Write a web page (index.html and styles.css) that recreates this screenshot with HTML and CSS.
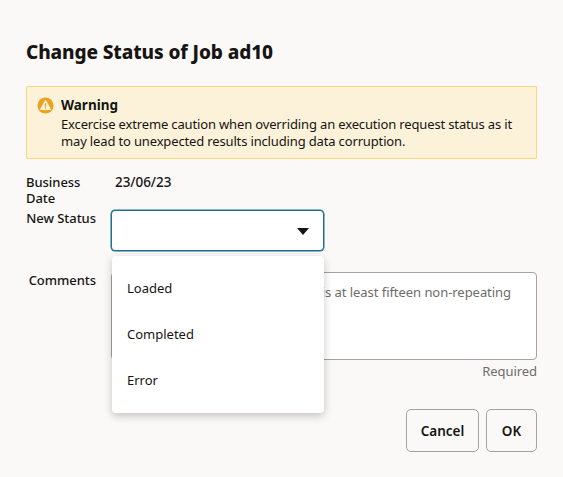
FILE: index.html
```html
<!DOCTYPE html>
<html lang="en">
<head>
<meta charset="utf-8">
<title>Change Status of Job ad10</title>
<link rel="stylesheet" href="styles.css">
</head>
<body>
<main class="dialog">
  <h1 class="title">Change Status of Job ad10</h1>
  <section class="warning">
    <svg class="warning-icon" viewBox="0 0 18 18" width="17" height="17" aria-hidden="true">
      <circle cx="9" cy="9" r="8.5" fill="#eba122"/>
      <path d="M9 3.6 14.4 13.2H3.6Z" fill="#fdf3dc" stroke="#fdf3dc" stroke-width="1" stroke-linejoin="round"/>
      <rect x="8.35" y="6.6" width="1.3" height="3.8" fill="#eba122"/>
      <rect x="8.35" y="11" width="1.3" height="1.3" fill="#eba122"/>
    </svg>
    <div class="warning-body">
      <div class="warning-title">Warning</div>
      <p class="warning-text">Excercise extreme caution when overriding an execution request status as it may lead to unexpected results including data corruption.</p>
    </div>
  </section>
  <div class="form">
    <div class="label label-left">Business Date</div>
    <div class="value">23/06/23</div>
    <div class="label label-status">New Status</div>
    <div class="select">
      <svg class="caret" viewBox="0 0 12 7" width="12" height="7" aria-hidden="true"><path d="M0 0H12L6 7Z" fill="#161513"/></svg>
    </div>
    <div class="label label-comments">Comments</div>
    <div class="comment-cell">
      <div class="textarea"><span class="placeholder">Enter a reason that is at least fifteen non-repeating</span></div>
      <div class="required">Required</div>
    </div>
  </div>
  <div class="actions">
    <button class="btn btn-cancel">Cancel</button>
    <button class="btn btn-ok">OK</button>
  </div>
  <ul class="menu">
    <li>Loaded</li>
    <li>Completed</li>
    <li>Error</li>
  </ul>
</main>
</body>
</html>
```
FILE: styles.css
```css
* { box-sizing: border-box; }
html, body { margin: 0; height: 100%; }
body {
  background: #fbf9f8;
  font-family: "Noto Sans", "Open Sans", sans-serif;
  color: #161513;
  overflow: hidden;
}
.dialog {
  position: relative;
  width: 563px;
  height: 477px;
  padding: 38px 26px 0;
}
.title {
  margin: 0;
  font-size: 19px;
  line-height: 28px;
  font-weight: 800;
  letter-spacing: -0.1px;
}
.warning {
  display: flex;
  gap: 7px;
  margin-top: 20px;
  height: 73px;
  width: 511px;
  padding: 9px 10px;
  background: #fcf2d9;
  border: 1px solid #fbd876;
  border-radius: 1px;
}
.warning-icon { flex: none; margin-top: 1px; }
.warning-title { font-size: 13.5px; line-height: 18px; margin-bottom: 2px; font-weight: 700; }
.warning-text { margin: 0; font-size: 13px; line-height: 17px; letter-spacing: -0.15px; }
.form {
  display: grid;
  grid-template-columns: 70px 426px;
  column-gap: 15px;
  margin-top: 15px;
  font-size: 13px;
  letter-spacing: -0.05px;
}
.label { font-weight: 500; line-height: 16px; }
.label-left { height: 36px; }
.label-status { text-align: right; white-space: nowrap; }
.label-comments { text-align: right; margin-top: 21px; }
.value { padding-left: 4px; font-weight: 500; line-height: 16px; font-size: 13.5px; }
.select {
  display: flex;
  align-items: center;
  justify-content: flex-end;
  width: 213px;
  height: 41px;
  padding: 0 14px 0 0;
  background: #fff;
  border: 1px solid #1f6f8f;
  border-radius: 4px;
  box-shadow: 0 0 0 .5px #1f6f8f;
}
.caret { margin-top: 1px; }
.comment-cell { margin-top: 21px; }
.textarea {
  height: 88px;
  padding: 11px 25px 11px 12px;
  background: #fff;
  border: 1px solid #a5a3a0;
  border-radius: 4px;
  line-height: 17px;
  text-align: right;
}
.placeholder { color: #6f6c69; white-space: nowrap; }
.required {
  margin-top: 2px;
  text-align: right;
  color: #6f6c69;
  line-height: 18px;
}
.actions {
  display: flex;
  justify-content: flex-end;
  gap: 7px;
  margin-top: 29px;
}
.btn {
  height: 43px;
  background: #fbf9f8;
  border: 1px solid #a5a3a0;
  border-radius: 5px;
  font: 600 13.5px "Noto Sans", "Open Sans", sans-serif;
  color: #161513;
  padding: 0;
}
.btn-cancel { width: 73px; }
.btn-ok { width: 51px; }
.menu {
  position: absolute;
  left: 112px;
  top: 256px;
  width: 212px;
  height: 157px;
  margin: 0;
  padding: 9px 0;
  list-style: none;
  background: #fff;
  border-radius: 4px;
  box-shadow: 0 3px 8px rgba(0, 0, 0, .22);
  font-size: 13px;
}
.menu li {
  height: 46px;
  line-height: 46px;
  padding-left: 15px;
}
```
